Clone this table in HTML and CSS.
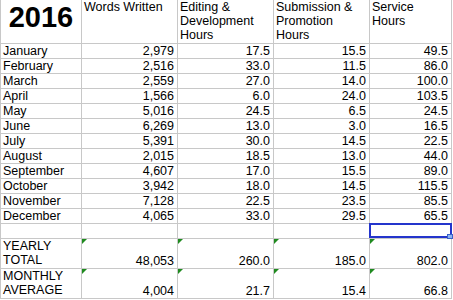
FILE: index.html
```html
<!DOCTYPE html>
<html>
<head>
<meta charset="utf-8">
<link rel="stylesheet" href="styles.css">
</head>
<body>
<div class="sheet">
  <div class="c head year">2016</div>
  <div class="c head">Words Written</div>
  <div class="c head">Editing &amp; Development Hours</div>
  <div class="c head">Submission &amp; Promotion Hours</div>
  <div class="c head">Service Hours</div>

  <div class="c">January</div><div class="c n">2,979</div><div class="c n">17.5</div><div class="c n">15.5</div><div class="c n">49.5</div>
  <div class="c">February</div><div class="c n">2,516</div><div class="c n">33.0</div><div class="c n">11.5</div><div class="c n">86.0</div>
  <div class="c">March</div><div class="c n">2,559</div><div class="c n">27.0</div><div class="c n">14.0</div><div class="c n">100.0</div>
  <div class="c">April</div><div class="c n">1,566</div><div class="c n">6.0</div><div class="c n">24.0</div><div class="c n">103.5</div>
  <div class="c">May</div><div class="c n">5,016</div><div class="c n">24.5</div><div class="c n">6.5</div><div class="c n">24.5</div>
  <div class="c">June</div><div class="c n">6,269</div><div class="c n">13.0</div><div class="c n">3.0</div><div class="c n">16.5</div>
  <div class="c">July</div><div class="c n">5,391</div><div class="c n">30.0</div><div class="c n">14.5</div><div class="c n">22.5</div>
  <div class="c">August</div><div class="c n">2,015</div><div class="c n">18.5</div><div class="c n">13.0</div><div class="c n">44.0</div>
  <div class="c">September</div><div class="c n">4,607</div><div class="c n">17.0</div><div class="c n">15.5</div><div class="c n">89.0</div>
  <div class="c">October</div><div class="c n">3,942</div><div class="c n">18.0</div><div class="c n">14.5</div><div class="c n">115.5</div>
  <div class="c">November</div><div class="c n">7,128</div><div class="c n">22.5</div><div class="c n">23.5</div><div class="c n">85.5</div>
  <div class="c">December</div><div class="c n">4,065</div><div class="c n">33.0</div><div class="c n">29.5</div><div class="c n">65.5</div>

  <div class="c"></div><div class="c"></div><div class="c"></div><div class="c"></div><div class="c sel"></div>

  <div class="c tall">YEARLY<br>TOTAL</div><div class="c n tall flag">48,053</div><div class="c n tall flag">260.0</div><div class="c n tall flag">185.0</div><div class="c n tall flag">802.0</div>
  <div class="c tall">MONTHLY<br>AVERAGE</div><div class="c n tall flag">4,004</div><div class="c n tall flag">21.7</div><div class="c n tall flag">15.4</div><div class="c n tall flag">66.8</div>
</div>
</body>
</html>
```

FILE: styles.css
```css
html, body {
  margin: 0;
  padding: 0;
  background: #ffffff;
}

.sheet {
  display: grid;
  grid-template-columns: 81px 96px 96px 96px 82px;
  grid-template-rows: 44px repeat(13, 15px) 30px 30px;
  width: 451px;
  border-left: 1px solid #c8c8c8;
  font-family: "Liberation Sans", Arial, sans-serif;
  font-size: 12.5px;
  line-height: 14px;
  color: #000;
}

.c {
  box-sizing: border-box;
  border-right: 1px solid #c8c8c8;
  border-bottom: 1px solid #c8c8c8;
  padding: 0 3px 0 2px;
  white-space: nowrap;
  overflow: visible;
  position: relative;
}

.head {
  white-space: normal;
  padding-left: 2px;
}

.year {
  font-size: 29px;
  font-weight: bold;
  line-height: 32px;
  text-align: center;
  padding: 1px 0 0 0;
}

.n {
  text-align: right;
}

.tall.n {
  display: flex;
  align-items: flex-end;
  justify-content: flex-end;
}

.flag::before {
  content: "";
  position: absolute;
  left: 0;
  top: 0;
  width: 0;
  height: 0;
  border-top: 5px solid #1f8a1f;
  border-right: 5px solid transparent;
}

.sel::after {
  content: "";
  position: absolute;
  left: -1px;
  top: -1px;
  width: 83px;
  height: 15px;
  box-sizing: border-box;
  border: 2px solid #2435cc;
}

.sel::before {
  content: "";
  position: absolute;
  left: 77px;
  top: 10px;
  width: 6px;
  height: 5px;
  box-sizing: border-box;
  background: #8fb3f0;
  border: 1px solid #3a62c8;
  z-index: 2;
}
```
